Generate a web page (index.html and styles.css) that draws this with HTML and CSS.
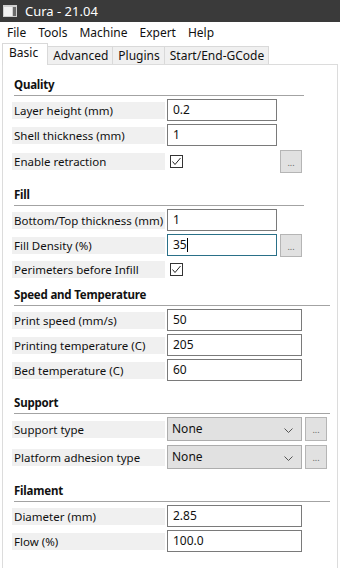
FILE: index.html
```html
<!DOCTYPE html>
<html>
<head>
    <meta name="viewport" content="width=device-width, initial-scale=1.0">
    <title>Cura - 21.04</title>
    <link rel="stylesheet" href="styles.css">
</head>
<body>
    <div class="titlebar">
        <svg class="app-icon" width="14" height="12" viewBox="0 0 14 12">
            <rect x="0" y="0" width="14" height="12" fill="#cfcfcf"/>
            <rect x="1" y="2" width="8" height="9" fill="#f2f2f2"/>
            <rect x="10" y="2" width="3" height="9" fill="#6b6b6b"/>
        </svg>
        <span>Cura - 21.04</span>
    </div>

    <div class="menubar">
        <span class="menu-item">File</span>
        <span class="menu-item">Tools</span>
        <span class="menu-item">Machine</span>
        <span class="menu-item">Expert</span>
        <span class="menu-item">Help</span>
    </div>

    <div class="tabs">
        <span class="tab active">Basic</span>
        <span class="tab">Advanced</span>
        <span class="tab">Plugins</span>
        <span class="tab">Start/End-GCode</span>
    </div>

    <div class="page">
        <!-- Quality -->
        <section class="group">
            <h2 class="group-title">Quality</h2>
            <div class="rows">
                <div class="row"><span class="label">Layer height (mm)</span><span class="field">0.2</span></div>
                <div class="row"><span class="label">Shell thickness (mm)</span><span class="field">1</span></div>
                <div class="row tall">
                    <span class="label">Enable retraction</span>
                    <span class="check-cell"><span class="check"><svg width="11" height="11" viewBox="0 0 11 11"><path d="M1.5 5.5 L4 8.5 L9.5 2" fill="none" stroke="#222" stroke-width="1"/></svg></span></span>
                    <span class="more">...</span>
                </div>
            </div>
        </section>

        <!-- Fill -->
        <section class="group">
            <h2 class="group-title">Fill</h2>
            <div class="rows">
                <div class="row"><span class="label">Bottom/Top thickness (mm)</span><span class="field">1</span></div>
                <div class="row">
                    <span class="label">Fill Density (%)</span>
                    <span class="field focused">35<span class="caret"></span></span>
                    <span class="more">...</span>
                </div>
                <div class="row short">
                    <span class="label">Perimeters before Infill</span>
                    <span class="check-cell"><span class="check"><svg width="11" height="11" viewBox="0 0 11 11"><path d="M1.5 5.5 L4 8.5 L9.5 2" fill="none" stroke="#222" stroke-width="1"/></svg></span></span>
                </div>
            </div>
        </section>

        <!-- Speed and Temperature -->
        <section class="group tight">
            <h2 class="group-title wide">Speed and Temperature</h2>
            <div class="rows">
                <div class="row"><span class="label">Print speed (mm/s)</span><span class="field wide">50</span></div>
                <div class="row"><span class="label">Printing temperature (C)</span><span class="field wide">205</span></div>
                <div class="row"><span class="label">Bed temperature (C)</span><span class="field wide">60</span></div>
            </div>
        </section>

        <!-- Support -->
        <section class="group">
            <h2 class="group-title wide">Support</h2>
            <div class="rows loose">
                <div class="row combo-row">
                    <span class="label">Support type</span>
                    <span class="combo">None<svg class="chevron" width="9" height="5" viewBox="0 0 9 5"><path d="M0.5 0.5 L4.5 4.5 L8.5 0.5" fill="none" stroke="#555" stroke-width="1"/></svg></span>
                    <span class="more">...</span>
                </div>
                <div class="row combo-row">
                    <span class="label">Platform adhesion type</span>
                    <span class="combo">None<svg class="chevron" width="9" height="5" viewBox="0 0 9 5"><path d="M0.5 0.5 L4.5 4.5 L8.5 0.5" fill="none" stroke="#555" stroke-width="1"/></svg></span>
                    <span class="more">...</span>
                </div>
            </div>
        </section>

        <!-- Filament -->
        <section class="group">
            <h2 class="group-title wide">Filament</h2>
            <div class="rows">
                <div class="row"><span class="label">Diameter (mm)</span><span class="field wide">2.85</span></div>
                <div class="row"><span class="label">Flow (%)</span><span class="field wide">100.0</span></div>
            </div>
        </section>
    </div>
</body>
</html>
```

FILE: styles.css
```css
body {
    margin: 0;
    width: 340px;
    height: 568px;
    overflow: hidden;
    background-color: #fff;
    color: #111;
    font-family: "Noto Sans", "Open Sans", sans-serif;
    font-size: 12px;
}
.titlebar {
    height: 22px;
    background-color: #3a3a3a;
    color: #fff;
    display: flex;
    align-items: center;
    gap: 8px;
    padding-left: 3px;
    font-size: 13px;
}
.menubar {
    height: 21px;
    display: flex;
    align-items: center;
    padding-left: 1px;
}
.menu-item {
    padding: 0 6px;
}
.tabs {
    height: 21px;
    display: flex;
    align-items: flex-end;
    padding-left: 2px;
}
.tab {
    height: 17px;
    line-height: 17px;
    padding: 0 4px 0 5px;
    margin-left: -1px;
    border: 1px solid #d9d9d9;
    border-bottom: none;
    background-color: #f0f0f0;
}
.tab.active {
    height: 21px;
    line-height: 18px;
    margin-left: 0;
    margin-bottom: -1px;
    padding: 0 9px 0 6px;
    background-color: #fff;
    z-index: 1;
}
.page {
    box-sizing: border-box;
    width: 336px;
    height: 504px;
    margin-left: 2px;
    padding: 9px 0 0 9px;
    border: 1px solid #dcdcdc;
    border-bottom: none;
}
.group {
    margin-top: 11px;
}
.group:first-child {
    margin-top: 0;
}
.group.tight {
    margin-top: 5px;
}
.group-title {
    box-sizing: border-box;
    width: 290px;
    height: 22px;
    line-height: 21px;
    margin: 0 0 3px 2px;
    border-bottom: 1px solid #a3a3a3;
    font-size: 11.5px;
    font-weight: bold;
    letter-spacing: -0.2px;
}
.group-title.wide {
    width: 316px;
}
.rows {
    display: flex;
    flex-direction: column;
    gap: 3px;
}
.rows.loose {
    gap: 4px;
    margin-top: 1px;
}
.row {
    height: 22px;
    display: flex;
    align-items: center;
}
.row.tall {
    height: 24px;
}
.row.short {
    height: 20px;
}
.row.combo-row {
    height: 24px;
}
.label {
    box-sizing: border-box;
    width: 153px;
    height: 17px;
    line-height: 17px;
    margin-right: 2px;
    padding-left: 2px;
    background-color: #f0f0f0;
    font-size: 11.5px;
    white-space: nowrap;
}
.field {
    box-sizing: border-box;
    width: 110px;
    height: 22px;
    line-height: 19px;
    padding-left: 5px;
    border: 1px solid #7a7a7a;
    background-color: #fff;
}
.field.wide {
    width: 135px;
}
.field.focused {
    border-color: #2a7088;
}
.caret {
    display: inline-block;
    width: 1px;
    height: 14px;
    background-color: #000;
    vertical-align: -3px;
}
.check-cell {
    width: 110px;
    display: flex;
    align-items: center;
}
.check {
    box-sizing: border-box;
    width: 13px;
    height: 13px;
    margin-left: 3px;
    border: 1px solid #333;
    background-color: #fff;
    display: flex;
}
.more {
    box-sizing: border-box;
    width: 22px;
    height: 23px;
    margin-left: 3px;
    border: 1px solid #b5b5b5;
    background-color: #e1e1e1;
    color: #666;
    font-size: 9px;
    text-align: center;
    line-height: 23px;
}
.combo-row .more {
    height: 24px;
    line-height: 24px;
}
.combo {
    box-sizing: border-box;
    width: 135px;
    height: 24px;
    padding: 0 8px 0 4px;
    border: 1px solid #adadad;
    background-color: #e1e1e1;
    display: flex;
    align-items: center;
    justify-content: space-between;
    line-height: 20px;
}
.chevron {
    margin-top: 2px;
}
```
